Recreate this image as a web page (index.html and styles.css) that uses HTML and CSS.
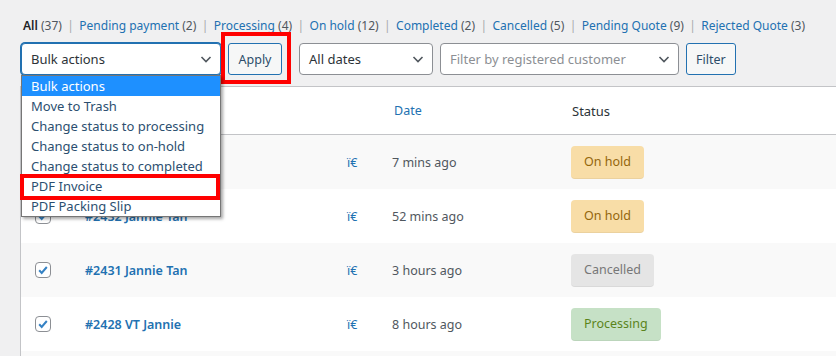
FILE: index.html
```html
<!DOCTYPE html>
<html>
<head>
<meta charset="utf-8">
<link rel="stylesheet" href="styles.css">
</head>
<body>
<div class="wrap">
  <ul class="subsubsub">
    <li><span class="current">All <span class="count">(37)</span></span><span class="sep">|</span></li>
    <li><a>Pending payment <span class="count">(2)</span></a><span class="sep">|</span></li>
    <li><a>Processing <span class="count">(4)</span></a><span class="sep">|</span></li>
    <li><a>On hold <span class="count">(12)</span></a><span class="sep">|</span></li>
    <li><a>Completed <span class="count">(2)</span></a><span class="sep">|</span></li>
    <li><a>Cancelled <span class="count">(5)</span></a><span class="sep">|</span></li>
    <li><a>Pending Quote <span class="count">(9)</span></a><span class="sep">|</span></li>
    <li><a>Rejected Quote <span class="count">(3)</span></a></li>
  </ul>

  <div class="tablenav">
    <div class="bulk">
      <div class="select select-bulk focused">
        <span>Bulk actions</span>
        <svg class="chev" width="14" height="14" viewBox="0 0 14 14"><path d="M2.5 5l4.5 4.5L11.5 5" fill="none" stroke="#50575e" stroke-width="1.6"/></svg>
      </div>
      <ul class="menu">
        <li class="selected">Bulk actions</li>
        <li>Move to Trash</li>
        <li>Change status to processing</li>
        <li>Change status to on-hold</li>
        <li>Change status to completed</li>
        <li class="marked">PDF Invoice</li>
        <li>PDF Packing Slip</li>
      </ul>
    </div>
    <div class="apply-wrap">
      <button class="button">Apply</button>
    </div>
    <div class="select select-dates">
      <span>All dates</span>
      <svg class="chev" width="14" height="14" viewBox="0 0 14 14"><path d="M2.5 5l4.5 4.5L11.5 5" fill="none" stroke="#50575e" stroke-width="1.6"/></svg>
    </div>
    <div class="select select-customer">
      <span class="placeholder">Filter by registered customer</span>
      <svg class="chev" width="14" height="14" viewBox="0 0 14 14"><path d="M2.5 5l4.5 4.5L11.5 5" fill="none" stroke="#50575e" stroke-width="1.6"/></svg>
    </div>
    <button class="button">Filter</button>
  </div>

  <div class="table">
    <div class="row head">
      <div class="c-check"></div>
      <div class="c-order">Order</div>
      <div class="c-icon"></div>
      <div class="c-date"><a>Date</a></div>
      <div class="c-status">Status</div>
    </div>
    <div class="row alt">
      <div class="c-check"><span class="cb"><svg width="14" height="14" viewBox="0 0 14 14"><path d="M3.2 7.2l2.5 2.7L10.8 4" fill="none" stroke="#3582c4" stroke-width="2"/></svg></span></div>
      <div class="c-order"><a>#2433 Jannie Tan</a></div>
      <div class="c-icon">ï€</div>
      <div class="c-date">7 mins ago</div>
      <div class="c-status"><mark class="status on-hold">On hold</mark></div>
    </div>
    <div class="row">
      <div class="c-check"><span class="cb"><svg width="14" height="14" viewBox="0 0 14 14"><path d="M3.2 7.2l2.5 2.7L10.8 4" fill="none" stroke="#3582c4" stroke-width="2"/></svg></span></div>
      <div class="c-order"><a>#2432 Jannie Tan</a></div>
      <div class="c-icon">ï€</div>
      <div class="c-date">52 mins ago</div>
      <div class="c-status"><mark class="status on-hold">On hold</mark></div>
    </div>
    <div class="row alt">
      <div class="c-check"><span class="cb"><svg width="14" height="14" viewBox="0 0 14 14"><path d="M3.2 7.2l2.5 2.7L10.8 4" fill="none" stroke="#3582c4" stroke-width="2"/></svg></span></div>
      <div class="c-order"><a>#2431 Jannie Tan</a></div>
      <div class="c-icon">ï€</div>
      <div class="c-date">3 hours ago</div>
      <div class="c-status"><mark class="status cancelled">Cancelled</mark></div>
    </div>
    <div class="row">
      <div class="c-check"><span class="cb"><svg width="14" height="14" viewBox="0 0 14 14"><path d="M3.2 7.2l2.5 2.7L10.8 4" fill="none" stroke="#3582c4" stroke-width="2"/></svg></span></div>
      <div class="c-order"><a>#2428 VT Jannie</a></div>
      <div class="c-icon">ï€</div>
      <div class="c-date">8 hours ago</div>
      <div class="c-status"><mark class="status processing">Processing</mark></div>
    </div>
    <div class="row alt short"></div>
  </div>
</div>
</body>
</html>
```

FILE: styles.css
```css
*, *::before, *::after { box-sizing: border-box; }
html, body { margin: 0; padding: 0; }
body {
  background: #f0f0f1;
  font-family: "Noto Sans", "Open Sans", sans-serif;
  color: #3c434a;
  width: 836px;
  height: 356px;
  overflow: hidden;
}
.wrap { padding-left: 20px; }

.subsubsub {
  list-style: none;
  margin: 0;
  padding: 16px 0 0 3px;
  display: flex;
  font-size: 12px;
  line-height: 20px;
  white-space: nowrap;
}
.subsubsub a { color: #2271b1; text-decoration: none; }
.subsubsub .current { color: #1d2327; font-weight: 600; }
.subsubsub .count { color: #50575e; font-weight: 400; }
.subsubsub .sep { color: #a7aaad; margin: 0 5.4px; }

.tablenav {
  display: flex;
  align-items: center;
  margin-top: 7px;
  padding-left: 1px;
  height: 32px;
}
.select {
  height: 32px;
  background: #fff;
  border: 1px solid #8c8f94;
  border-radius: 4px;
  display: flex;
  align-items: center;
  justify-content: space-between;
  padding: 0 7px 0 9px;
  font-size: 13px;
  color: #2c3338;
}
.select.focused {
  border-color: #2271b1;
  box-shadow: 0 0 0 1px #2271b1;
}
.bulk { position: relative; }
.select-bulk { width: 200px; }
.select-dates { width: 134px; margin-left: 17px; }
.select-customer { width: 239px; margin-left: 7px; }
.placeholder { color: #8c8f94; }
.chev { display: block; }

.button {
  height: 32px;
  padding: 0 9px;
  background: #f6f7f7;
  border: 1px solid #2271b1;
  border-radius: 3px;
  color: #2c4d6a;
  font-family: inherit;
  font-size: 12.5px;
  margin-left: 7px;
}
.apply-wrap { position: relative; }
.apply-wrap .button { width: 54px; padding: 0; }
.apply-wrap::after {
  content: "";
  position: absolute;
  left: 0;
  top: -11px;
  width: 70px;
  height: 52px;
  border: 4px solid #ff0000;
}

.menu {
  position: absolute;
  left: 0;
  top: 32px;
  width: 200px;
  margin: 0;
  padding: 0;
  list-style: none;
  background: #fff;
  border: 1px solid #767676;
  box-shadow: 2px 2px 3px rgba(0,0,0,0.35);
  z-index: 10;
  font-size: 13px;
}
.menu li {
  height: 20px;
  line-height: 20px;
  padding-left: 9px;
  color: #2c4f70;
  position: relative;
}
.menu li.selected { background: #1e90ff; color: #fff; }
.menu li.marked::after {
  content: "";
  position: absolute;
  left: -2px;
  top: -2px;
  width: 200px;
  height: 26px;
  border: 4px solid #ff0000;
}

.table {
  margin-top: 11px;
  background: #fff;
  border-top: 1px solid #c3c4c7;
  border-left: 1px solid #c3c4c7;
}
.row {
  display: grid;
  grid-template-columns: 64px 262px 45px 179px 1fr;
  align-items: center;
  height: 54px;
  font-size: 13px;
}
.row.short { height: 10px; }
.row.alt { background: #f9f9f9; }
.row.head {
  height: 48px;
  border-bottom: 1px solid #c3c4c7;
  background: #fff;
  font-size: 13px;
  color: #2c3338;
}
.c-check { padding-left: 14px; }
.c-order a { color: #2271b1; font-weight: 600; font-size: 12.5px; }
.c-icon { color: #2271b1; font-size: 12.5px; }
.c-date { color: #50575e; font-size: 12.5px; }
.c-date a { color: #2271b1; padding-left: 2px; }
.head .c-status { padding-left: 1px; }
.cb {
  width: 16px;
  height: 16px;
  border: 1px solid #8c8f94;
  border-radius: 4px;
  background: #fff;
  display: flex;
  align-items: center;
  justify-content: center;
}
.status {
  display: inline-flex;
  align-items: center;
  height: 33px;
  padding: 0 13px;
  border-radius: 4px;
  font-size: 12.5px;
  border-bottom: 1px solid rgba(0,0,0,0.05);
}
.on-hold { background: #f8dda7; color: #94660c; }
.cancelled { background: #e5e5e5; color: #777; }
.processing { background: #c6e1c6; color: #5b841b; }
```
